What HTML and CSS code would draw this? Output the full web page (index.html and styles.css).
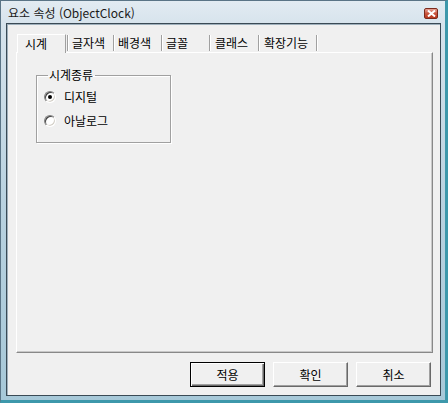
FILE: index.html
```html
<!DOCTYPE html>
<html lang="ko">
<head>
<meta charset="utf-8">
<link rel="stylesheet" href="styles.css">
</head>
<body>
<div class="window">
  <div class="titlebar">
    <span class="title">요소 속성 (ObjectClock)</span>
    <span class="close"><svg width="9" height="7" viewBox="0 0 9 7"><path d="M1 0.5 L8 6.5 M8 0.5 L1 6.5" stroke="#fff" stroke-width="2"/></svg></span>
  </div>
  <div class="client">
    <div class="tabs">
      <div class="tab sel">시계</div>
      <div class="sep"></div>
      <div class="tab w44">글자색</div>
      <div class="sep"></div>
      <div class="tab w46">배경색</div>
      <div class="sep"></div>
      <div class="tab w46">글꼴</div>
      <div class="sep"></div>
      <div class="tab w47">클래스</div>
      <div class="sep"></div>
      <div class="tab w56">확장기능</div>
      <div class="sep"></div>
    </div>
    <div class="panel">
      <fieldset class="group">
        <legend>시계종류</legend>
        <label class="radio"><span class="dot on"></span>디지털</label>
        <label class="radio"><span class="dot"></span>아날로그</label>
      </fieldset>
    </div>
    <div class="buttons">
      <button class="btn def">적용</button>
      <button class="btn">확인</button>
      <button class="btn">취소</button>
    </div>
  </div>
</div>
</body>
</html>
```

FILE: styles.css
```css
* { box-sizing: border-box; }
html, body { margin: 0; padding: 0; }
body {
  width: 448px; height: 403px; overflow: hidden;
  font-family: "Noto Sans CJK KR", "Noto Sans", sans-serif;
  font-size: 12px; color: #000;
}
.window {
  width: 448px; height: 403px;
  background: linear-gradient(to bottom, #e2ebf2 0px, #d6e3ec 24px, #b9d2e0 200px, #a6c8d8 403px);
  border: 1px solid #5a7486;
  border-right: 3px solid #3d98ab;
  border-bottom: 3px solid #3d98ab;
  display: flex; flex-direction: column;
}
.titlebar {
  height: 22px;
  display: flex; align-items: center; justify-content: space-between;
  padding: 0 7px 0 7px;
}
.title { font-size: 12px; color: #1a1a1a; line-height: 14px; padding-top: 1px; }
.close {
  width: 14px; height: 11px; margin-top: 3px;
  background: linear-gradient(to bottom, #e7a194, #c9563f 50%, #b7391f);
  border: 1px solid #7c2a1c; border-radius: 2px;
  display: flex; align-items: center; justify-content: center;
}
.close svg { display: block; }
.client {
  margin: 0 4px 4px 5px;
  flex: 1;
  background: #f0f0f0;
  border: 1px solid #3a4a55;
  box-shadow: inset 1px 1px 0 #9fb0bc;
  padding: 9px 8px 0 9px;
  display: flex; flex-direction: column;
}
.tabs {
  display: flex; align-items: flex-end;
  height: 19px; padding-left: 1px;
}
.tab {
  height: 16px; line-height: 16px; margin-bottom: 1px;
  padding-left: 3px; white-space: nowrap;
}
.tab.sel {
  width: 49px; height: 19px; line-height: 17px; margin-bottom: -1px;
  padding-left: 7px; margin-right: 1px;
  background: #f0f0f0;
  border-top: 1px solid #fff; border-left: 1px solid #fff;
  border-right: 1px solid #a0a0a0;
  position: relative; z-index: 1;
}
.w44 { width: 44px; }
.w46 { width: 46px; }
.w47 { width: 47px; padding-left: 4px; }
.w56 { width: 56px; padding-left: 4px; }
.sep {
  width: 2px; height: 16px; margin-bottom: 1px;
  border-left: 1px solid #a0a0a0; border-right: 1px solid #fff;
}
.panel {
  width: 417px; height: 301px;
  border-top: 1px solid #fff; border-left: 1px solid #fff;
  border-right: 1px solid #888; border-bottom: 1px solid #888;
  box-shadow: inset -1px -1px 0 #c8c8c8;
  padding: 15px 0 0 19px;
}
.group {
  width: 135px; height: 75px;
  margin: 0; padding: 7px 0 0 7px;
  border: 1px solid #a0a0a0;
  box-shadow: inset 1px 1px 0 #fff, 1px 1px 0 #fff;
  display: flex; flex-direction: column; gap: 8px;
}
.group legend { padding: 0 2px 0 1px; margin-left: 4px; line-height: 14px; }
.radio { display: flex; align-items: center; height: 16px; line-height: 16px; }
.dot {
  width: 12px; height: 12px; border-radius: 50%;
  margin-right: 8px;
  background: #fff;
  border: 1px solid;
  border-color: #808080 #fff #fff #808080;
  box-shadow: inset 1px 1px 0 #404040, inset -1px -1px 0 #d4d0c8;
  position: relative;
}
.dot.on::after {
  content: ""; position: absolute; left: 3px; top: 3px;
  width: 4px; height: 4px; border-radius: 50%; background: #000;
}
.buttons {
  display: flex; justify-content: flex-end; gap: 8px;
  padding: 9px 1px 0 0;
}
.btn {
  width: 75px; height: 25px; padding: 0;
  font-family: inherit; font-size: 12px; color: #000;
  background: #f0f0f0;
  border: 1px solid; border-color: #fff #696969 #696969 #fff;
  box-shadow: inset -1px -1px 0 #a0a0a0;
}
.btn.def {
  border: 1px solid #000;
  box-shadow: inset 1px 1px 0 #fff, inset -1px -1px 0 #696969, inset -2px -2px 0 #a0a0a0;
}
```
